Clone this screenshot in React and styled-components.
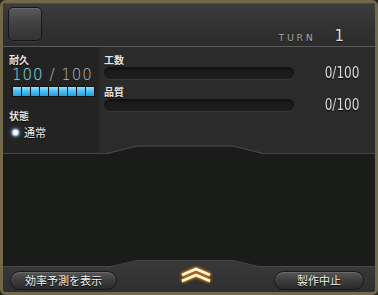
import React from "react";
import styled, { createGlobalStyle } from "styled-components";

const Global = createGlobalStyle`
  html, body { margin: 0; padding: 0; background: #24231c; }
  body { font-family: "Noto Sans CJK JP", "Liberation Sans", sans-serif; }
  * { box-sizing: border-box; }
`;

const Frame = styled.div`
  width: 378px;
  height: 295px;
  border: 3px solid #74684a;
  border-radius: 6px;
  box-shadow: inset 0 0 0 1px #121210, 0 0 0 1px #2e2b20;
  background: #1b1d1b;
  display: flex;
  flex-direction: column;
  overflow: hidden;
`;

const Header = styled.div`
  height: 44px;
  flex: none;
  display: flex;
  align-items: flex-start;
  padding: 4px 0 0 5px;
  background: linear-gradient(180deg, #3e3e3e 0%, #333 45%, #2c2c2c 100%);
  border-bottom: 1px solid #5a5a5a;
  box-shadow: inset 0 1px 0 #4a4a4a;
`;

const IconSlot = styled.div`
  width: 34px;
  height: 34px;
  border-radius: 5px;
  border: 1px solid #161616;
  background: linear-gradient(180deg, #5a5a5a 0%, #444 40%, #333 100%);
  box-shadow: inset 0 1px 0 #6a6a6a, 0 1px 0 #3a3a3a;
`;

const TurnBox = styled.div`
  margin-left: auto;
  margin-right: 31px;
  margin-top: 20px;
  display: flex;
  align-items: baseline;
  gap: 19px;
`;

const TurnLabel = styled.span`
  font-family: "DejaVu Sans", sans-serif;
  font-size: 9.5px;
  letter-spacing: 2.6px;
  color: #a8a8a8;
  text-shadow: 0 1px 0 #111;
`;

const TurnNum = styled.span`
  font-family: "DejaVu Sans", sans-serif;
  font-size: 15px;
  color: #d8d8d8;
  text-shadow: 0 1px 0 #111;
`;

const Stats = styled.div`
  height: 107px;
  flex: none;
  display: flex;
  border-bottom: 1px solid #454545;
`;

const LeftPanel = styled.div`
  width: 96px;
  background: #232323;
  padding: 6px 0 0 6px;
  display: flex;
  flex-direction: column;
`;

const RightPanel = styled.div`
  flex: 1;
  background: #2b2b2b;
  padding: 6px 16px 0 5px;
  display: flex;
  flex-direction: column;
`;

const Label = styled.div`
  font-size: 10px;
  font-weight: 700;
  line-height: 13px;
  color: #e6e6e6;
  text-shadow: 0 1px 1px #000;
  margin-top: ${(p) => p.$mt || 0}px;
`;

const Durability = styled.div`
  font-family: "DejaVu Sans", sans-serif;
  font-weight: 200;
  font-size: 15px;
  line-height: 18px;
  margin: 0 0 0 3px;
  letter-spacing: 1px;
  white-space: nowrap;
`;

const Cur = styled.span`
  color: #86d6de;
  text-shadow: 0 0 1px #2a5a60;
`;

const Max = styled.span`
  color: #b8b8b8;
`;

const SegBar = styled.div`
  margin: 2px 0 0 3px;
  width: 83px;
  height: 11px;
  padding: 1px;
  background: #101214;
  display: flex;
  gap: 1px;
`;

const Seg = styled.div`
  flex: 1;
  background: linear-gradient(180deg, #8fe2ff 0%, #4cc0f4 45%, #2a9ae0 100%);
`;

const StatusRow = styled.div`
  display: flex;
  align-items: center;
  gap: 6px;
  margin: 2px 0 0 4px;
  font-size: 11px;
  color: #f0f0f0;
  text-shadow: 0 1px 1px #000;
`;

const Dot = styled.span`
  width: 5px;
  height: 5px;
  border-radius: 50%;
  background: #fff;
  box-shadow: 0 0 2px 1px #cfe6ff, 0 0 4px 1px #6d9fd0;
`;

const MeterRow = styled.div`
  display: flex;
  align-items: center;
  height: 15px;
  margin-top: -1px;
`;

const Meter = styled.div`
  width: 190px;
  height: 12px;
  border-radius: 6px;
  background: #1c1c1c;
  border-top: 1px solid #121212;
  box-shadow: 0 1px 0 #3a3a3a, inset 0 1px 2px #0e0e0e;
`;

const MeterValue = styled.span`
  margin-left: auto;
  font-family: "DejaVu Sans Condensed", "DejaVu Sans", sans-serif;
  font-size: 16px;
  color: #dcdcdc;
  text-shadow: 0 1px 1px #000;
  transform: scaleX(0.84);
  transform-origin: right center;
`;

const DarkArea = styled.div`
  position: relative;
  flex: 1;
  background: #1a1c1a;
`;

const Notch = styled.svg`
  position: absolute;
  left: 104px;
  width: 156px;
  height: 9px;
  top: ${(p) => p.$top}px;
`;

const BottomBar = styled.div`
  position: relative;
  height: 26px;
  flex: none;
  display: flex;
  align-items: center;
  padding: 0 11px 0 7px;
  background: linear-gradient(180deg, #383838 0%, #2e2e2e 100%);
  border-top: 1px solid #474747;
`;

const Pill = styled.button`
  width: ${(p) => p.$w}px;
  height: 19px;
  border-radius: 10px;
  border: 1px solid #181818;
  background: linear-gradient(180deg, #575757 0%, #3c3c3c 50%, #2a2a2a 100%);
  box-shadow: inset 0 1px 0 #6a6a6a;
  color: #f2f2f2;
  font-family: "Noto Sans CJK JP", sans-serif;
  font-size: 11px;
  line-height: 17px;
  padding: 0;
  text-shadow: 0 1px 1px #000;
  margin-top: 1px;
`;

const Chevron = styled.svg`
  margin: 0 auto;
  width: 34px;
  height: 18px;
  margin-top: -10px;
  filter: drop-shadow(0 0 1.5px #e0901a) drop-shadow(0 0 1px #b8650c);
`;

export default function App() {
  return (
    <>
      <Global />
      <Frame>
        <Header>
          <IconSlot />
          <TurnBox>
            <TurnLabel>TURN</TurnLabel>
            <TurnNum>1</TurnNum>
          </TurnBox>
        </Header>
        <Stats>
          <LeftPanel>
            <Label>耐久</Label>
            <Durability>
              <Cur>100</Cur>
              <Max> / 100</Max>
            </Durability>
            <SegBar>
              {Array.from({ length: 9 }).map((_, i) => (
                <Seg key={i} />
              ))}
            </SegBar>
            <Label $mt={12}>状態</Label>
            <StatusRow>
              <Dot />
              <span>通常</span>
            </StatusRow>
          </LeftPanel>
          <RightPanel>
            <Label>工数</Label>
            <MeterRow>
              <Meter />
              <MeterValue>0/100</MeterValue>
            </MeterRow>
            <Label $mt={5}>品質</Label>
            <MeterRow>
              <Meter />
              <MeterValue>0/100</MeterValue>
            </MeterRow>
          </RightPanel>
        </Stats>
        <DarkArea>
          <Notch $top={-9} viewBox="0 0 156 9">
            <polygon points="0,9 30,1.5 126,1.5 156,9" fill="#1a1c1a" />
            <polyline points="0,8.5 30,1 126,1 156,8.5" fill="none" stroke="#4a4a4a" strokeWidth="1" />
          </Notch>
        </DarkArea>
        <BottomBar>
          <Notch $top={-8} viewBox="0 0 156 9">
            <polygon points="0,9 30,2 126,2 156,9" fill="#383838" />
            <polyline points="0,8.5 30,1.5 126,1.5 156,8.5" fill="none" stroke="#474747" strokeWidth="1" />
          </Notch>
          <Pill $w={107}>効率予測を表示</Pill>
          <Chevron viewBox="0 0 34 18">
            <polyline points="3,9 17,3 31,9" fill="none" stroke="#fff6dc" strokeWidth="2.6" strokeLinejoin="miter" />
            <polyline points="3,15 17,9 31,15" fill="none" stroke="#fff6dc" strokeWidth="2.6" strokeLinejoin="miter" />
          </Chevron>
          <Pill $w={90}>製作中止</Pill>
        </BottomBar>
      </Frame>
    </>
  );
}
